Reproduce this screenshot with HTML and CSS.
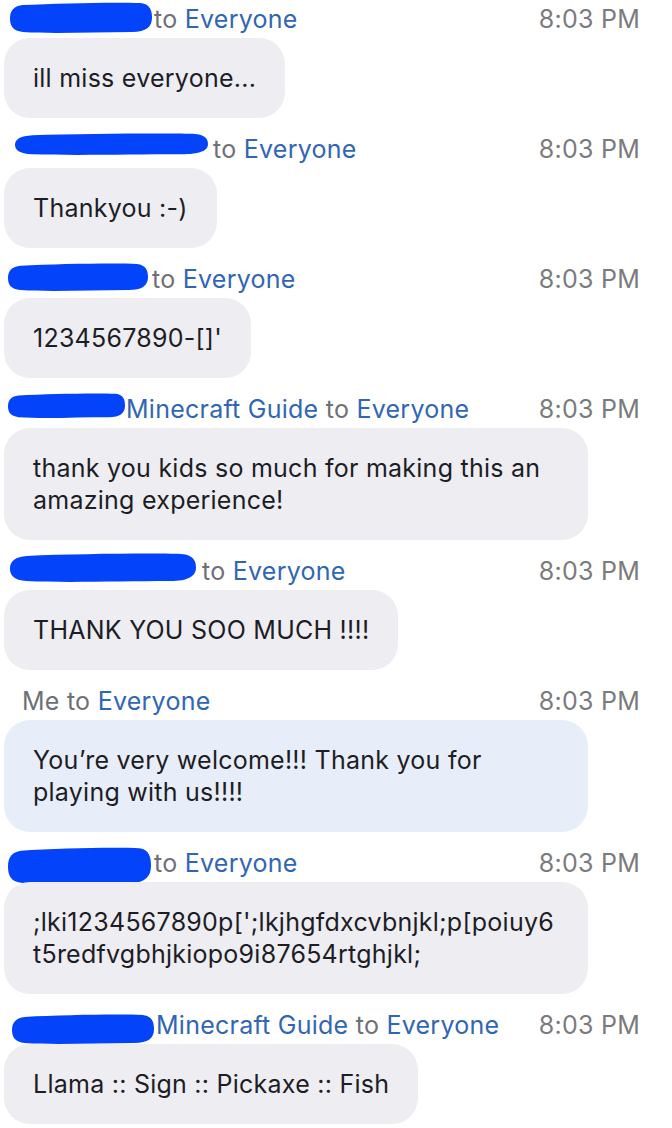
FILE: index.html
```html
<!DOCTYPE html>
<html lang="en">
<head>
<meta charset="utf-8">
<title>Chat</title>
<link rel="stylesheet" href="styles.css">
</head>
<body>
<div class="chat">

  <div class="msg">
    <div class="head">
      <div class="from">
        <svg class="blob b1" viewBox="0 0 100 30" preserveAspectRatio="none"><path d="M9,3 C35,1 75,0 92,1 C99,2 100,9 100,15 C100,24 96,29 86,29 C60,29 30,31 9,29 C2,28 0,23 0,16 C0,8 3,4 9,3 Z"/></svg>
        <span class="to">to <span class="who">Everyone</span></span>
      </div>
      <span class="time">8:03 PM</span>
    </div>
    <div class="bubble">ill miss everyone...</div>
  </div>

  <div class="msg">
    <div class="head">
      <div class="from">
        <svg class="blob b2" viewBox="0 0 100 30" preserveAspectRatio="none"><path d="M9,3 C35,1 75,0 92,1 C99,2 100,9 100,15 C100,24 96,29 86,29 C60,29 30,31 9,29 C2,28 0,23 0,16 C0,8 3,4 9,3 Z"/></svg>
        <span class="to">to <span class="who">Everyone</span></span>
      </div>
      <span class="time">8:03 PM</span>
    </div>
    <div class="bubble">Thankyou :-)</div>
  </div>

  <div class="msg">
    <div class="head">
      <div class="from">
        <svg class="blob b3" viewBox="0 0 100 30" preserveAspectRatio="none"><path d="M9,3 C35,1 75,0 92,1 C99,2 100,9 100,15 C100,24 96,29 86,29 C60,29 30,31 9,29 C2,28 0,23 0,16 C0,8 3,4 9,3 Z"/></svg>
        <span class="to">to <span class="who">Everyone</span></span>
      </div>
      <span class="time">8:03 PM</span>
    </div>
    <div class="bubble">1234567890-[]'</div>
  </div>

  <div class="msg">
    <div class="head">
      <div class="from">
        <svg class="blob b4" viewBox="0 0 100 30" preserveAspectRatio="none"><path d="M9,3 C35,1 75,0 92,1 C99,2 100,9 100,15 C100,24 96,29 86,29 C60,29 30,31 9,29 C2,28 0,23 0,16 C0,8 3,4 9,3 Z"/></svg>
        <span class="to"><span class="who">Minecraft Guide</span> to <span class="who">Everyone</span></span>
      </div>
      <span class="time">8:03 PM</span>
    </div>
    <div class="bubble full">thank you kids so much for making this an<br>amazing experience!</div>
  </div>

  <div class="msg">
    <div class="head">
      <div class="from">
        <svg class="blob b5" viewBox="0 0 100 30" preserveAspectRatio="none"><path d="M9,3 C35,1 75,0 92,1 C99,2 100,9 100,15 C100,24 96,29 86,29 C60,29 30,31 9,29 C2,28 0,23 0,16 C0,8 3,4 9,3 Z"/></svg>
        <span class="to">to <span class="who">Everyone</span></span>
      </div>
      <span class="time">8:03 PM</span>
    </div>
    <div class="bubble">THANK YOU SOO MUCH !!!!</div>
  </div>

  <div class="msg">
    <div class="head me">
      <div class="from">
        <span class="to">Me to <span class="who">Everyone</span></span>
      </div>
      <span class="time">8:03 PM</span>
    </div>
    <div class="bubble full mine">You’re very welcome!!! Thank you for<br>playing with us!!!!</div>
  </div>

  <div class="msg">
    <div class="head">
      <div class="from">
        <svg class="blob b7" viewBox="0 0 100 30" preserveAspectRatio="none"><path d="M9,3 C35,1 75,0 92,1 C99,2 100,9 100,15 C100,24 96,29 86,29 C60,29 30,31 9,29 C2,28 0,23 0,16 C0,8 3,4 9,3 Z"/></svg>
        <span class="to">to <span class="who">Everyone</span></span>
      </div>
      <span class="time">8:03 PM</span>
    </div>
    <div class="bubble full">;lki1234567890p[';lkjhgfdxcvbnjkl;p[poiuy6<br>t5redfvgbhjkiopo9i87654rtghjkl;</div>
  </div>

  <div class="msg">
    <div class="head">
      <div class="from">
        <svg class="blob b8" viewBox="0 0 100 30" preserveAspectRatio="none"><path d="M9,3 C35,1 75,0 92,1 C99,2 100,9 100,15 C100,24 96,29 86,29 C60,29 30,31 9,29 C2,28 0,23 0,16 C0,8 3,4 9,3 Z"/></svg>
        <span class="to"><span class="who">Minecraft Guide</span> to <span class="who">Everyone</span></span>
      </div>
      <span class="time">8:03 PM</span>
    </div>
    <div class="bubble">Llama :: Sign :: Pickaxe :: Fish</div>
  </div>

</div>
</body>
</html>
```

FILE: styles.css
```css
html, body {
  margin: 0;
  padding: 0;
  background: #ffffff;
}

body {
  font-family: Inter, "Liberation Sans", Arial, sans-serif;
  font-size: 25px;
  letter-spacing: 0.25px;
  color: #1d1d26;
  width: 672px;
  overflow: hidden;
}

.chat {
  display: flex;
  flex-direction: column;
  gap: 12px;
}

.msg {
  display: flex;
  flex-direction: column;
  align-items: flex-start;
}

.head {
  align-self: stretch;
  height: 38px;
  display: flex;
  align-items: center;
  justify-content: space-between;
  padding: 0 32px 0 8px;
  line-height: 1;
}

.head.me {
  padding-left: 22px;
}

.from {
  display: flex;
  align-items: center;
  white-space: nowrap;
}

.to {
  color: #6f6f78;
}

.who {
  color: #3166b4;
}

.time {
  color: #7b7b7e;
}

.blob {
  display: block;
  fill: #0344fb;
  flex: none;
}

.b1 { width: 142px; height: 31px; margin: 0 2px 4px 2px; }
.b2 { width: 193px; height: 22px; margin: 0 5px 10px 7px; }
.b3 { width: 140px; height: 28px; margin: 0 4px 4px 0; }
.b4 { width: 117px; height: 25px; margin: 0 1px 8px 0; }
.b5 { width: 186px; height: 29px; margin: 0 6px 8px 2px; }
.b7 { width: 143px; height: 37px; margin: 4px 3px 0 0; }
.b8 { width: 142px; height: 30px; margin: 8px 2px 0 4px; }

.bubble {
  margin-left: 4px;
  background: #ededf2;
  border-radius: 26px;
  padding: 24px 29px;
  line-height: 32px;
  width: fit-content;
  max-width: 584px;
  box-sizing: border-box;
}

.bubble.full {
  width: 584px;
}

.bubble.mine {
  background: #e8eef9;
}
```
